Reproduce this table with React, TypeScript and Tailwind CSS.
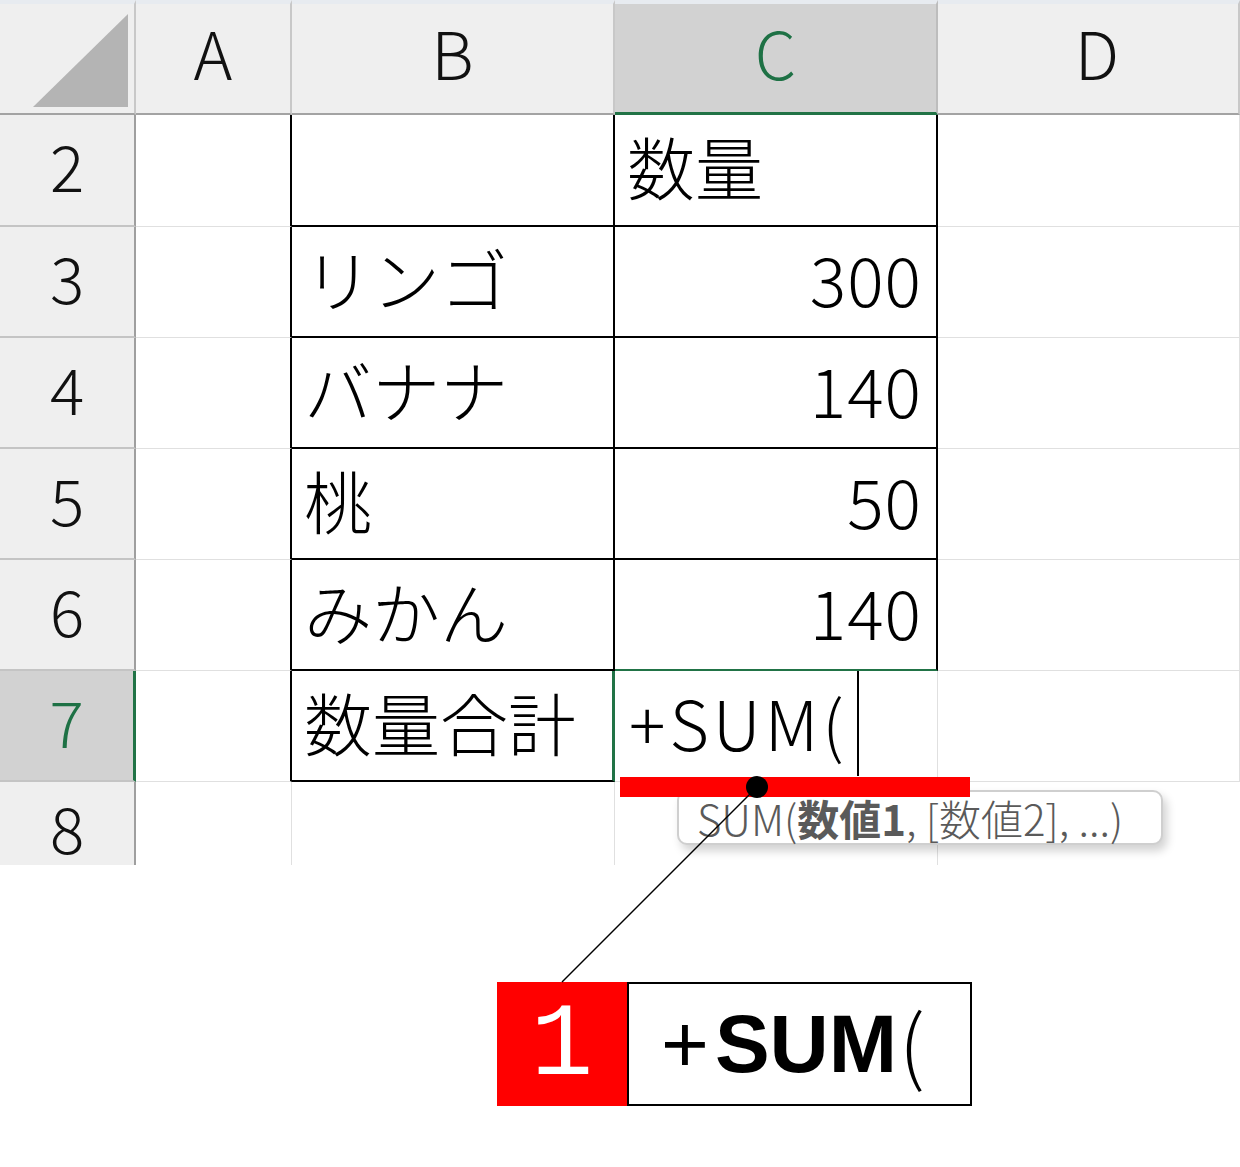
import React from 'react';

const jp = "font-[family-name:'Noto_Sans_CJK_JP',sans-serif]";

type CellProps = {
    className?: string;
    children?: React.ReactNode;
};

const Cell: React.FC<CellProps> = ({ className = '', children }) => (
    <div className={`relative flex items-center ${className}`}>{children}</div>
);

const rowHead = 'justify-center pb-[12px] bg-[#efefef] border-r-2 border-b-2 border-r-[#9f9f9f] border-b-[#c4c4c4] text-[64px] font-light text-[#111]';
const colHead = 'justify-center pb-[14px] bg-[#efefef] border-t-4 border-t-[#e7ebf0] border-r-2 border-b-2 border-r-[#c8c8c8] border-b-[#a3a3a3] text-[66px] font-light text-[#111]';
const plain = 'border-r border-b border-r-[#e0e0e0] border-b-[#e0e0e0]';
const val = 'pb-[8px] text-[68px] font-light text-black';

const fruits = [
    { name: 'リンゴ', qty: '300' },
    { name: 'バナナ', qty: '140' },
    { name: '桃', qty: '50' },
    { name: 'みかん', qty: '140' },
];

export default function App() {
    return (
        <div className={`relative w-[1240px] h-[1167px] bg-white ${jp}`}>
            {/* sheet */}
            <div className="relative h-[865px] overflow-hidden">
                <div className="grid grid-cols-[136px_156px_323px_323px_1fr] grid-rows-[115px_112px_111px_111px_111px_111px_111px_83px] h-full">
                    {/* header row */}
                    <Cell className="bg-[#efefef] border-t-4 border-t-[#e7ebf0] border-r-2 border-b-2 border-r-[#c8c8c8] border-b-[#a3a3a3]">
                        <svg width="136" height="111" className="absolute left-0 top-0" viewBox="0 0 136 111">
                            <polygon points="33,103 128,103 128,10" fill="#b4b4b4" />
                        </svg>
                    </Cell>
                    <Cell className={colHead}>A</Cell>
                    <Cell className={colHead}>B</Cell>
                    <Cell className="justify-center pb-[14px] bg-[#d2d2d2] border-t-4 border-t-[#e7ebf0] border-r-2 border-b-[3px] border-r-[#bdbdbd] border-b-[#217346] text-[66px] font-light text-[#1e7145]">
                        C
                    </Cell>
                    <Cell className={`${colHead} pl-[18px]`}>D</Cell>

                    {/* row 2 */}
                    <Cell className={rowHead}>2</Cell>
                    <Cell className="border-b border-b-[#e0e0e0] border-r-2 border-r-black" />
                    <Cell className="border-r-2 border-b-2 border-black" />
                    <Cell className={`border-r-2 border-b-2 border-black pl-[12px] ${val}`}>数量</Cell>
                    <Cell className={plain} />

                    {/* rows 3-6 */}
                    {fruits.map((f, i) => (
                        <React.Fragment key={i}>
                            <Cell className={rowHead}>{i + 3}</Cell>
                            <Cell className="border-b border-b-[#e0e0e0] border-r-2 border-r-black" />
                            <Cell className={`border-r-2 border-b-2 border-black pl-[12px] ${val}`}>{f.name}</Cell>
                            <Cell
                                className={`justify-end border-r-2 border-b-2 border-r-black pr-[14px] tracking-[1px] ${val} ${
                                    i === 3 ? 'border-b-[#217346]' : 'border-b-black'
                                }`}
                            >
                                {f.qty}
                            </Cell>
                            <Cell className={plain} />
                        </React.Fragment>
                    ))}

                    {/* row 7 */}
                    <Cell className="justify-center pb-[12px] bg-[#d2d2d2] border-r-[3px] border-b-2 border-r-[#217346] border-b-[#c4c4c4] text-[64px] font-light text-[#1e7145]">
                        7
                    </Cell>
                    <Cell className="border-b border-b-[#e0e0e0] border-r-2 border-r-black" />
                    <Cell className={`border-b-2 border-b-black border-r-[3px] border-r-[#217346] pl-[12px] ${val}`}>
                        数量合計
                    </Cell>
                    <Cell className={`${plain} pl-[14px] tracking-[4px] ${val}`}>
                        +SUM(
                        <div className="absolute left-[242px] top-0 h-[105px] w-[2px] bg-black" />
                    </Cell>
                    <Cell className={plain} />

                    {/* row 8 */}
                    <Cell className="justify-center pt-[4px] bg-[#efefef] border-r-2 border-r-[#9f9f9f] text-[64px] font-light text-[#111]">8</Cell>
                    <Cell className="border-r border-r-[#e0e0e0]" />
                    <Cell className="border-r border-r-[#e0e0e0]" />
                    <Cell className="border-r border-r-[#e0e0e0]" />
                    <Cell />
                </div>

                {/* function hint */}
                <div className="absolute left-[677px] top-[790px] w-[486px] h-[55px] rounded-[10px] border-2 border-[#cfcfcf] bg-white shadow-[4px_6px_10px_rgba(0,0,0,0.18)] flex items-center pl-[18px] text-[42px] text-[#5a5a5a] leading-none">
                    <span className="font-light">SUM(</span>
                    <span className="font-bold">数値1</span>
                    <span className="font-light">, [数値2], ...)</span>
                </div>

                {/* red underline */}
                <div className="absolute left-[620px] top-[777px] w-[350px] h-[20px] bg-[#ff0000]" />
            </div>

            {/* callout */}
            <div className="flex ml-[497px] mt-[117px] h-[124px]">
                <div className="w-[130px] bg-[#ff0000] flex items-center justify-center text-white text-[104px] font-[family-name:'Liberation_Mono',monospace] leading-none pt-[4px]">
                    1
                </div>
                <div className="w-[345px] border-2 border-black bg-white flex items-center pl-[32px] text-[82px] text-black leading-none">
                    <span className="font-[family-name:'Liberation_Sans',sans-serif]">+</span>
                    <span className="font-bold font-[family-name:'Liberation_Sans',sans-serif] ml-[6px]">SUM</span>
                    <span className="font-light ml-[2px] -mt-[6px]">(</span>
                </div>
            </div>

            {/* leader line */}
            <svg className="absolute left-0 top-0 pointer-events-none" width="1240" height="1167">
                <line x1="757" y1="787" x2="562" y2="982" stroke="black" strokeWidth="1.5" />
                <circle cx="757" cy="787" r="11" fill="black" />
            </svg>
        </div>
    );
}
